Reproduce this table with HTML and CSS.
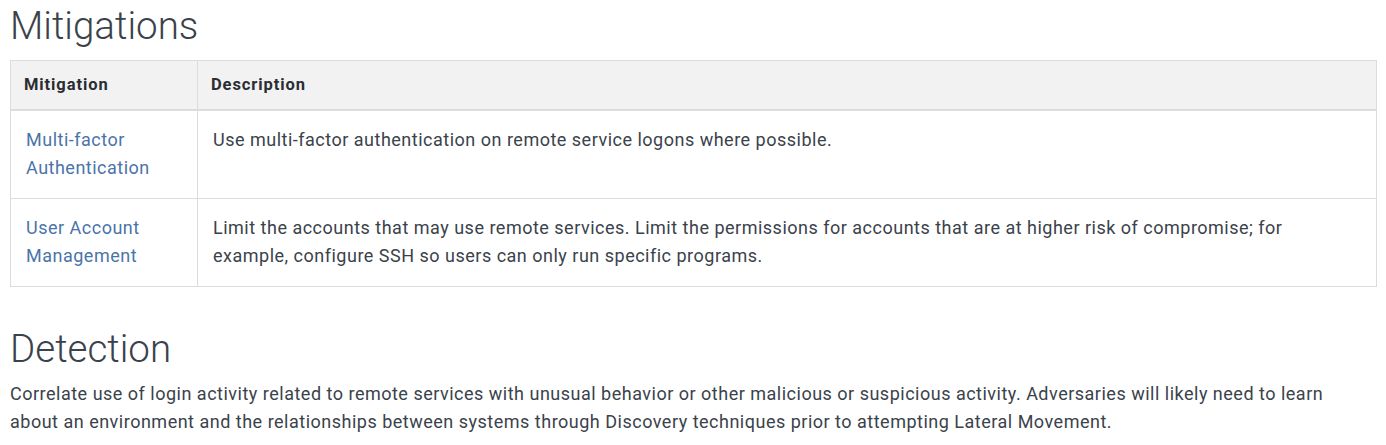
FILE: index.html
```html
<!DOCTYPE html>
<html>
<head>
<meta charset="utf-8">
<link rel="stylesheet" href="styles.css">
</head>
<body>
<div class="page">
  <h2 class="section-title">Mitigations</h2>
  <table class="mit-table">
    <thead>
      <tr><th class="col-name">Mitigation</th><th>Description</th></tr>
    </thead>
    <tbody>
      <tr>
        <td class="col-name"><a href="#">Multi-factor Authentication</a></td>
        <td>Use multi-factor authentication on remote service logons where possible.</td>
      </tr>
      <tr>
        <td class="col-name"><a href="#">User Account Management</a></td>
        <td>Limit the accounts that may use remote services. Limit the permissions for accounts that are at higher risk of compromise; for example, configure SSH so users can only run specific programs.</td>
      </tr>
    </tbody>
  </table>
  <h2 class="section-title detection">Detection</h2>
  <p class="desc">Correlate use of login activity related to remote services with unusual behavior or other malicious or suspicious activity. Adversaries will likely need to learn about an environment and the relationships between systems through Discovery techniques prior to attempting Lateral Movement.</p>
</div>
</body>
</html>
```
FILE: styles.css
```css
html, body {
  margin: 0;
  padding: 0;
  background: #fff;
}
.page {
  padding: 0 9px 0 10px;
  font-family: Roboto, "Liberation Sans", sans-serif;
  color: #3a424b;
  font-size: 18px;
  letter-spacing: 0.5px;
  line-height: 28px;
}
.section-title {
  font-weight: 300;
  font-size: 38.5px;
  letter-spacing: 0;
  line-height: 48px;
  margin: 2px 0 10px 0;
  color: #3a424b;
}
.detection {
  margin-top: 38px;
  margin-bottom: 7px;
}
.mit-table {
  width: 100%;
  border-collapse: collapse;
  border: 1px solid #dcdcdc;
}
.mit-table th {
  background: #f2f2f2;
  text-align: left;
  font-weight: 700;
  font-size: 16.5px;
  letter-spacing: 0.9px;
  padding: 10px 13px 10px 13px;
  border: 1px solid #dcdcdc;
  border-bottom: 2px solid #dcdcdc;
  height: 26px;
  color: #2a2d31;
}
.mit-table td {
  vertical-align: top;
  padding: 15px 15px 16px 15px;
  border: 1px solid #dcdcdc;
}
.mit-table .col-name {
  width: 156px;
}
.mit-table a {
  color: #4a74a8;
  text-decoration: none;
}
.desc {
  margin: 0;
  padding-right: 30px;
}
```
